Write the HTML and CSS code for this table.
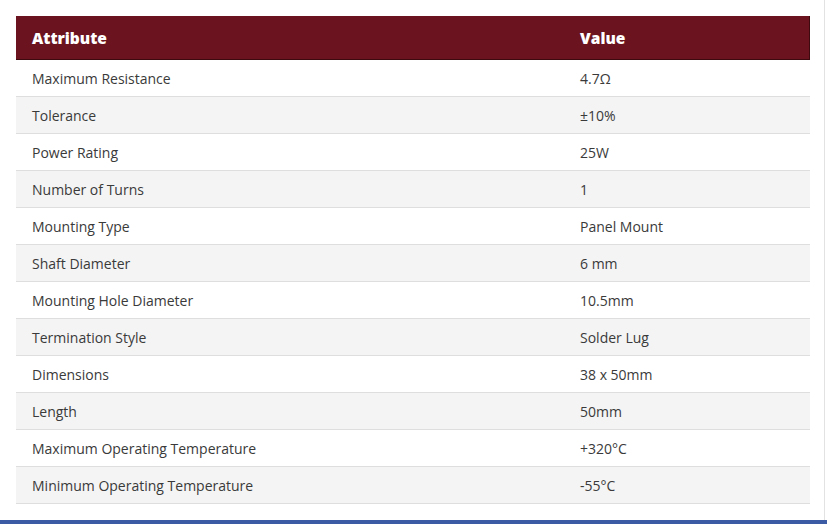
FILE: index.html
```html
<!DOCTYPE html>
<html>
<head>
<meta charset="utf-8">
<link rel="stylesheet" href="styles.css">
</head>
<body>
<div class="page">
  <div class="content">
    <table class="spec">
      <thead>
        <tr><th class="c1">Attribute</th><th>Value</th></tr>
      </thead>
      <tbody>
        <tr><td>Maximum Resistance</td><td>4.7Ω</td></tr>
        <tr><td>Tolerance</td><td>±10%</td></tr>
        <tr><td>Power Rating</td><td>25W</td></tr>
        <tr><td>Number of Turns</td><td>1</td></tr>
        <tr><td>Mounting Type</td><td>Panel Mount</td></tr>
        <tr><td>Shaft Diameter</td><td>6 mm</td></tr>
        <tr><td>Mounting Hole Diameter</td><td>10.5mm</td></tr>
        <tr><td>Termination Style</td><td>Solder Lug</td></tr>
        <tr><td>Dimensions</td><td>38 x 50mm</td></tr>
        <tr><td>Length</td><td>50mm</td></tr>
        <tr><td>Maximum Operating Temperature</td><td>+320°C</td></tr>
        <tr><td>Minimum Operating Temperature</td><td>-55°C</td></tr>
      </tbody>
    </table>
  </div>
  <div class="footer-bar"></div>
</div>
</body>
</html>
```
FILE: styles.css
```css
html, body {
  margin: 0;
  padding: 0;
  background: #fff;
}
.page {
  width: 827px;
  height: 524px;
  display: flex;
  flex-direction: column;
  overflow: hidden;
}
.content {
  flex: 1;
  width: 825px;
  border-right: 1px solid #e2e2e2;
  padding: 16px 0 0 16px;
  box-sizing: border-box;
}
.spec {
  width: 794px;
  border-collapse: collapse;
  font-family: "Open Sans", "Noto Sans", sans-serif;
  font-size: 14px;
  color: #3a3a3a;
}
.spec th {
  background: #6b141f;
  color: #fff;
  font-weight: 800;
  font-size: 15.5px;
  text-align: left;
  height: 43px;
  padding: 0 16px;
  border-bottom: 1px solid #3d0a10;
}
.spec th:last-child {
  border-right: 1px solid #3d0a10;
}
.spec th.c1 {
  width: 516px;
}
.spec tbody tr:first-child td {
  border-top: 1px solid #fff;
}
.spec td {
  height: 36px;
  padding: 0 16px;
  border-bottom: 1px solid #dedede;
}
.spec tbody tr:nth-child(even) td {
  background: #f4f4f4;
}
.footer-bar {
  height: 4px;
  background: #3b5ba5;
}
```
